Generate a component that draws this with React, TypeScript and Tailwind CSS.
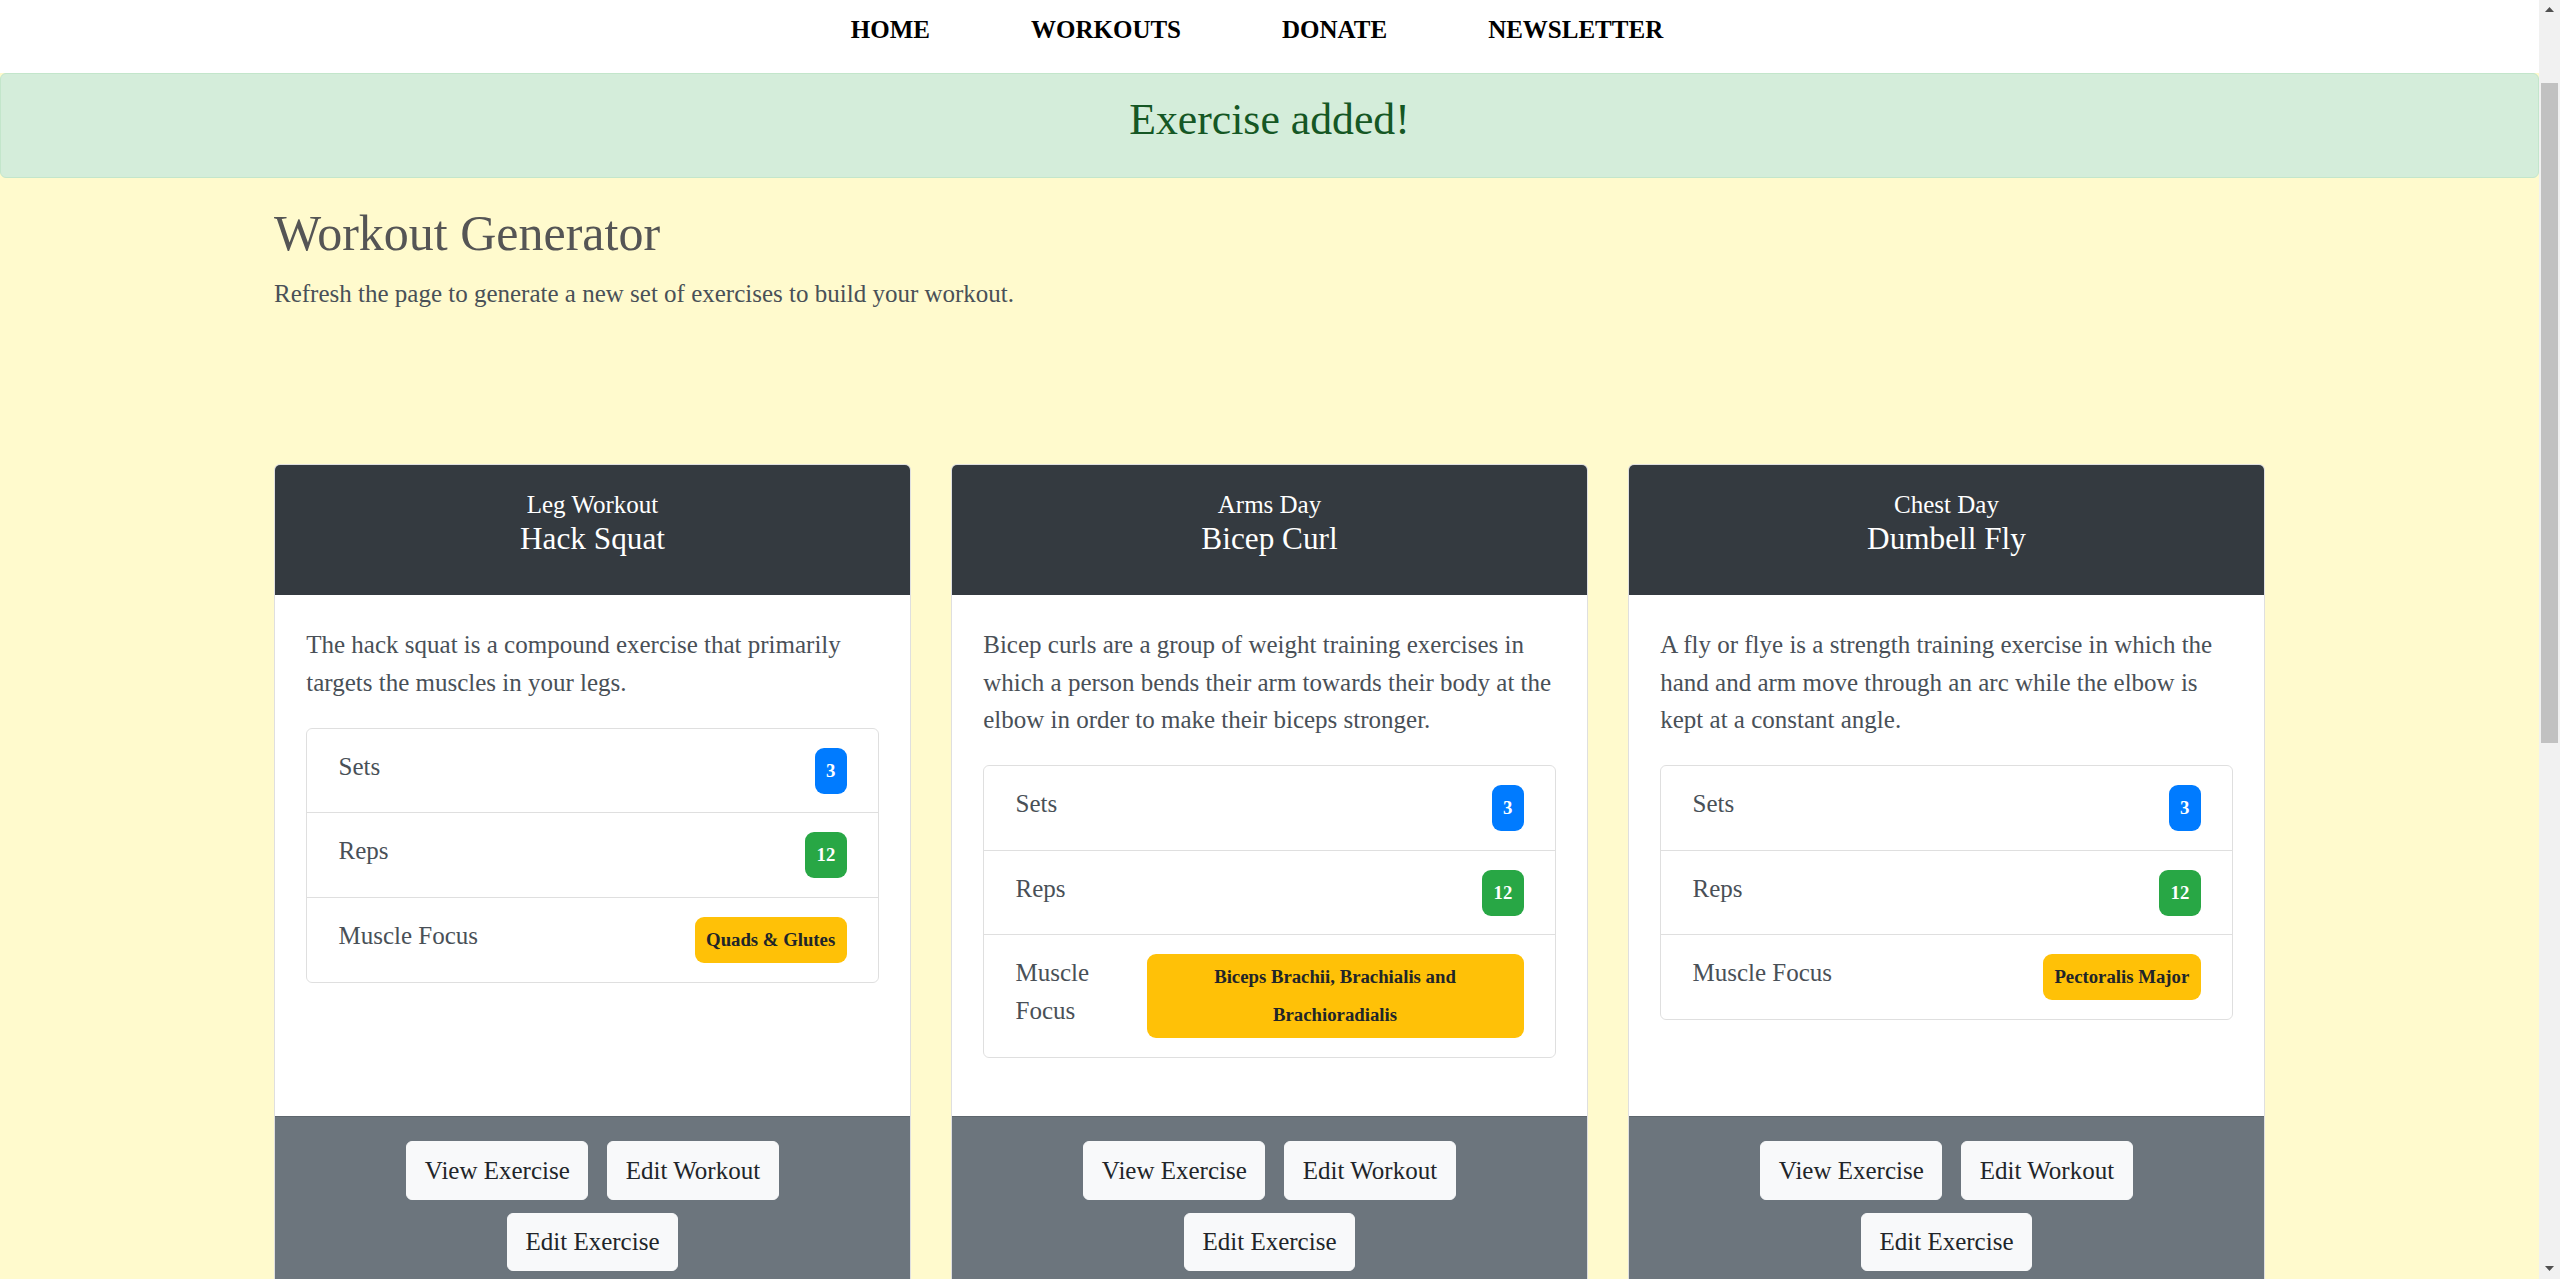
const cards = [
  {
    workout: "Leg Workout",
    name: "Hack Squat",
    desc: "The hack squat is a compound exercise that primarily targets the muscles in your legs.",
    sets: "3",
    reps: "12",
    focus: "Quads & Glutes",
  },
  {
    workout: "Arms Day",
    name: "Bicep Curl",
    desc: "Bicep curls are a group of weight training exercises in which a person bends their arm towards their body at the elbow in order to make their biceps stronger.",
    sets: "3",
    reps: "12",
    focus: "Biceps Brachii, Brachialis and Brachioradialis",
  },
  {
    workout: "Chest Day",
    name: "Dumbell Fly",
    desc: "A fly or flye is a strength training exercise in which the hand and arm move through an arc while the elbow is kept at a constant angle.",
    sets: "3",
    reps: "12",
    focus: "Pectoralis Major",
  },
];

const navLinks = ["Home", "Workouts", "Donate", "Newsletter"];

const Badge = ({ color, children }: { color: string; children: string }) => (
  <span
    className={`shrink-0 max-w-[377px] rounded-[9px] px-[11.25px] py-[4.3px] text-center text-[18.75px] font-bold leading-[37.5px] ${color}`}
  >
    {children}
  </span>
);

const ExerciseCard = ({ card }: { card: (typeof cards)[number] }) => {
  return (
    <div className="flex flex-col overflow-hidden rounded-[6px] border border-black/[0.125] bg-white">
      {/* header */}
      <div className="bg-[#343a40] pb-[38px] pt-[25px] text-center text-white">
        <div className="text-[25px] leading-[30px]">{card.workout}</div>
        <div className="text-[31.25px] leading-[37.5px]">{card.name}</div>
      </div>

      {/* body */}
      <div className="flex-1 p-[31.25px]">
        <p className="mb-[26.5px] text-[25px] leading-[37.5px] text-[#495057]">{card.desc}</p>
        <ul className="mb-[27.5px] rounded-[6px] border border-black/[0.125] text-[25px] leading-[37.5px] text-[#495057]">
          <li className="flex items-start justify-between border-b border-black/[0.125] px-[31.25px] py-[18.75px]">
            <span>Sets</span>
            <Badge color="bg-[#007bff] text-white">{card.sets}</Badge>
          </li>
          <li className="flex items-start justify-between border-b border-black/[0.125] px-[31.25px] py-[18.75px]">
            <span>Reps</span>
            <Badge color="bg-[#28a745] text-white">{card.reps}</Badge>
          </li>
          <li className="flex items-start justify-between px-[31.25px] py-[18.75px]">
            <span className="min-w-0">Muscle Focus</span>
            <Badge color="bg-[#ffc107] text-[#212529]">{card.focus}</Badge>
          </li>
        </ul>
      </div>

      {/* footer */}
      <div className="flex flex-col items-center gap-[13px] border-t border-black/[0.125] bg-[#6c757d] pb-[24px] pt-[24px]">
        <div className="flex gap-[19px]">
          <button className="rounded-[6px] border border-[#f8f9fa] bg-[#f8f9fa] px-[17.5px] py-[9.5px] text-[25px] leading-[37.5px] text-[#212529]">
            View Exercise
          </button>
          <button className="rounded-[6px] border border-[#f8f9fa] bg-[#f8f9fa] px-[17.5px] py-[9.5px] text-[25px] leading-[37.5px] text-[#212529]">
            Edit Workout
          </button>
        </div>
        <button className="rounded-[6px] border border-[#f8f9fa] bg-[#f8f9fa] px-[17.5px] py-[9.5px] text-[25px] leading-[37.5px] text-[#212529]">
          Edit Exercise
        </button>
      </div>
    </div>
  );
};

export default function App() {
  return (
    <div className="flex h-[1279px] w-full overflow-hidden bg-[#fffacd] font-['Liberation_Serif','Times_New_Roman',serif]">
      <div className="flex min-w-0 flex-1 flex-col">
        {/* nav */}
        <nav className="flex h-[73px] shrink-0 justify-center gap-[101px] bg-white pr-[25px] pt-[11px] text-[25px] font-bold uppercase leading-[37.5px] text-black">
          {navLinks.map((link) => (
            <a key={link} href="#">
              {link}
            </a>
          ))}
        </nav>

        {/* flash message */}
        <div className="mb-[25px] shrink-0 rounded-[6px] border border-[#c3e6cb] bg-[#d4edda] py-[18.75px] text-center text-[#155724]">
          <h3 className="mb-[12.5px] text-[43.75px] leading-[1.2]">Exercise added!</h3>
        </div>

        <main className="mx-auto w-[1991px] shrink-0">
          <h1 className="mb-[12.5px] text-[50px] leading-[1.2] text-[#555555]">Workout Generator</h1>
          <p className="text-[25px] leading-[37.5px] text-[#495057]">
            Refresh the page to generate a new set of exercises to build your workout.
          </p>

          <div className="mt-[151px] grid grid-cols-3 gap-[40px]">
            {cards.map((card) => (
              <ExerciseCard key={card.name} card={card} />
            ))}
          </div>
        </main>
      </div>

      {/* scrollbar */}
      <div className="flex w-[21px] shrink-0 flex-col items-center bg-[#f1f1f1]">
        <svg className="mt-[7px]" width="9" height="5" viewBox="0 0 9 5">
          <path d="M0 5 L4.5 0 L9 5 Z" fill="#505050" />
        </svg>
        <div className="mt-[71px] h-[660px] w-[17px] bg-[#c1c1c1]" />
        <div className="flex-1" />
        <svg className="mb-[8px]" width="9" height="5" viewBox="0 0 9 5">
          <path d="M0 0 L4.5 5 L9 0 Z" fill="#505050" />
        </svg>
      </div>
    </div>
  );
}
